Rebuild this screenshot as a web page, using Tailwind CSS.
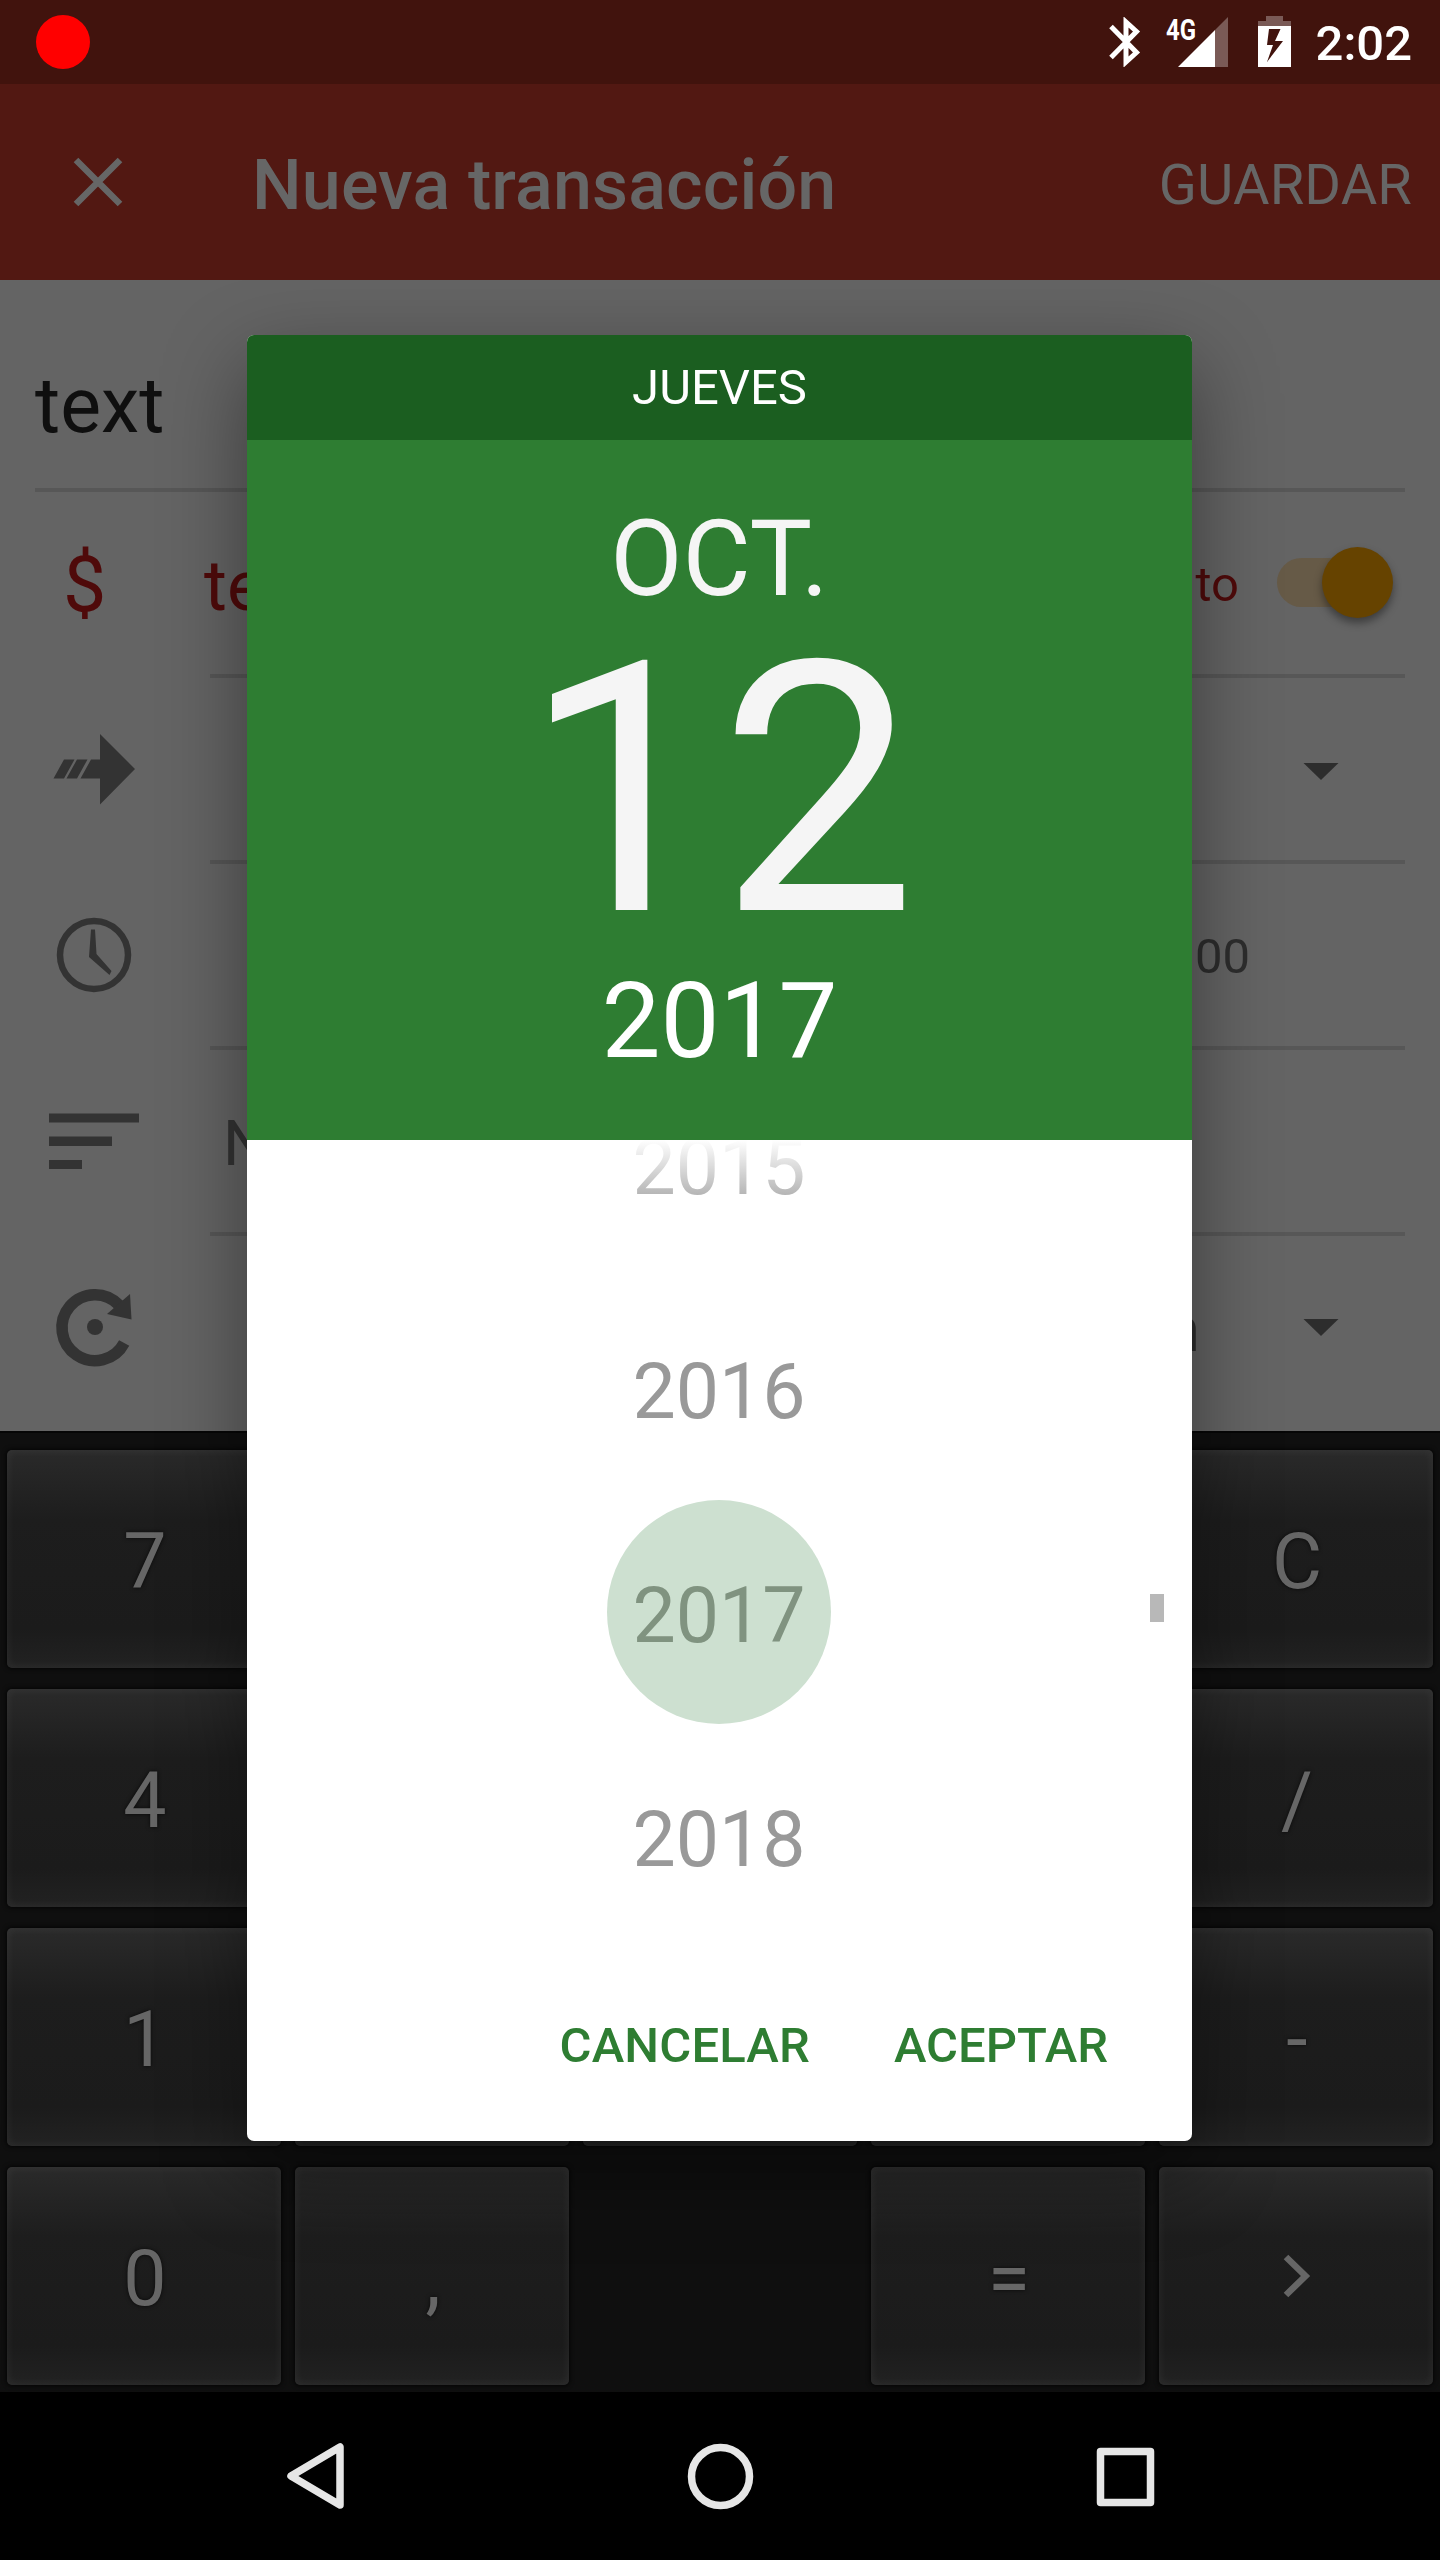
<!DOCTYPE html>
<html lang="es">
<head>
<meta charset="utf-8">
<title>Nueva transacción</title>
<script src="https://cdn.jsdelivr.net/npm/@tailwindcss/browser@4"></script>
</head>
<body class="bg-black">
<div class="relative w-[1440px] h-[2560px] overflow-hidden flex flex-col font-[Roboto,sans-serif] bg-black">

  <!-- Form -->
  <main class="order-3 h-[1151px] shrink-0 bg-[#646464] text-[#2d2d2d]">
    <div class="h-[212px] ml-[35px] mr-[35px] border-b-4 border-[#575757] pt-[76px] text-[77px] leading-[100px] text-[#0f0f0f]">text</div>

    <div class="grid grid-cols-[210px_1fr] pr-[35px] h-[186px] text-[#4f0a0a]">
      <div class="h-[182px] pl-[63px] pt-[4px] flex items-center text-[77px] leading-[100px]">$</div>
      <div class="border-b-4 border-[#575757] flex items-center pr-[12px]">
        <div class="flex-1 -ml-[6px] pt-[6px] text-[70px] leading-[90px]">text</div>
        <div class="pt-[3px] text-[49px] leading-[60px]">to</div>
        <div class="ml-[38px] w-[116px] h-[71px] -mt-[2px] flex items-center">
          <div class="w-[105px] h-[49px] rounded-full bg-[#665a47] flex items-center">
            <div class="ml-[45px] size-[71px] shrink-0 rounded-full bg-[#664300] shadow-[0_5px_8px_rgba(0,0,0,0.4)]"></div>
          </div>
        </div>
      </div>
    </div>

    <div class="grid grid-cols-[210px_1fr] pr-[35px] h-[186px]">
      <div class="h-[182px] pl-[49px] flex items-center">
        <svg class="size-[90px]" viewBox="0 0 90 90" fill="#333"><path d="M51 10L86 45 51 80.500V54.500H31.500L42 35.500H51zM15 35.500H25.500L15 54.500H4.500zM28 35.500H38.500L28 54.500H17.500z"/></svg>
      </div>
      <div class="border-b-4 border-[#575757] flex items-center justify-end pr-[66px] pt-[3px]">
        <svg class="w-[36px] h-[18px]" viewBox="0 0 36 18" fill="#2d2d2d"><path d="M.5 1h35L18 18z"/></svg>
      </div>
    </div>

    <div class="grid grid-cols-[210px_1fr] pr-[35px] h-[186px]">
      <div class="h-[182px] pl-[49px] flex items-center">
        <svg class="size-[90px]" viewBox="0 0 90 90"><circle cx="45" cy="45" r="34" fill="none" stroke="#333" stroke-width="6.500"/><path fill="#333" d="M42 19.500h4L47.500 44 62.500 61 60.500 65 40 47z"/></svg>
      </div>
      <div class="border-b-4 border-[#575757] flex items-center justify-end pr-[155px] pt-[4px] text-[49px] leading-[60px]">00</div>
    </div>

    <div class="grid grid-cols-[210px_1fr] pr-[35px] h-[186px]">
      <div class="h-[182px] pl-[49px] flex items-center">
        <svg class="size-[90px]" viewBox="0 0 90 90" fill="#333"><path d="M0 17.500h90v9H0zM0 40.500h63v9.500H0zM0 64h33v9H0z"/></svg>
      </div>
      <div class="border-b-4 border-[#575757] flex items-center pl-[13px] pt-[5px] text-[63px] leading-[80px] text-[#333]">Nota</div>
    </div>

    <div class="grid grid-cols-[210px_1fr] pr-[35px] h-[182px]">
      <div class="pl-[49px] flex items-center">
        <svg class="size-[90px]" viewBox="0 0 90 90"><path d="M75.200 61A33 33 0 1 1 70 23" fill="none" stroke="#333" stroke-width="11.500"/><path fill="#333" d="M81 12L82.500 37.500 58 32z"/><circle cx="46" cy="45" r="8" fill="#333"/></svg>
      </div>
      <div class="flex items-center justify-end pr-[66px]">
        <div class="pt-[5px] mr-[103px] text-[63px] leading-[80px]">Sin repetición</div>
        <svg class="w-[36px] h-[18px]" viewBox="0 0 36 18" fill="#2d2d2d"><path d="M.5 1h35L18 18z"/></svg>
      </div>
    </div>
  </main>

  <!-- Calculator keypad -->
  <section id="keypad" class="order-4 h-[961px] shrink-0 bg-[#0f0f0f] border-t-[2px] border-[#060606] pt-[17px] px-[7px] grid grid-cols-[repeat(5,274px)] auto-rows-[218px] gap-x-[14px] gap-y-[21px] content-start text-[77px] leading-[100px] text-[#666]"></section>

  <!-- Navigation bar -->
  <nav class="order-5 h-[168px] shrink-0 bg-black flex items-center px-[275px] justify-between">
    <svg class="w-[80px] h-[80px]" viewBox="0 0 80 80" fill="none" stroke="#e6e6e6" stroke-width="7.500" stroke-linejoin="round"><path d="M65 11V69L16 40z"/></svg>
    <svg class="w-[80px] h-[80px]" viewBox="0 0 80 80" fill="none" stroke="#e6e6e6" stroke-width="7.500"><circle cx="40.500" cy="40.500" r="29"/></svg>
    <svg class="w-[80px] h-[80px]" viewBox="0 0 80 80" fill="none" stroke="#e6e6e6" stroke-width="7.500" stroke-linejoin="round"><path d="M15.500 15.500h50v51h-50z"/></svg>
  </nav>

  <!-- Date picker dialog -->
  <div class="absolute left-[247px] top-[335px] w-[945px] h-[1806px] rounded-[7px] overflow-visible shadow-[0_30px_84px_rgba(0,0,0,0.42)]">
    <div class="size-full rounded-[7px] overflow-hidden bg-white flex flex-col">
      <div class="h-[105px] shrink-0 bg-[#1b5e20] text-white text-[49px] flex items-center justify-center">JUEVES</div>
      <div class="h-[700px] shrink-0 bg-[#2e7d32] text-[#f5f5f5] text-center flex flex-col pt-[60px]">
        <div class="text-[105px] leading-[120px]">OCT.</div>
        <div class="mt-[20px] text-[350px] leading-[300px]">12</div>
        <div class="mt-[22px] text-[105px] leading-[120px] text-white">2017</div>
      </div>
      <div class="relative h-[808px] shrink-0 overflow-hidden">
        <div class="-mt-[88px] pr-px flex flex-col items-center text-[77px] leading-[100px] text-[#999]">
          <div class="h-[224px] pt-[7px] flex items-center">2015</div>
          <div class="h-[224px] pt-[7px] flex items-center">2016</div>
          <div class="size-[224px] pt-[7px] flex items-center justify-center rounded-full bg-[#cde0d0] text-[#809380]">2017</div>
          <div class="h-[224px] pt-[7px] flex items-center">2018</div>
        </div>
        <div class="absolute inset-x-0 top-0 h-[76px] bg-linear-to-b from-white to-white/0"></div>
        <div class="absolute right-[28px] top-[454px] w-[14px] h-[28px] bg-[#b8b8b8]"></div>
      </div>
      <div class="flex-1 flex items-center justify-end gap-[84px] pr-[84px] pt-[2px] text-[49px] font-medium text-[#2e7d32]">
        <span class="tracking-[0.15px]">CANCELAR</span><span>ACEPTAR</span>
      </div>
    </div>
  </div>

  <!-- Status bar -->
  <header class="relative order-1 h-[84px] shrink-0 bg-[#41130d] flex items-center pl-[36px] pr-[28px] text-white">
    <div class="size-[54px] rounded-full bg-[#f00]"></div>
    <svg class="ml-auto w-[32px] h-[50px]" viewBox="0 0 32 50" fill="none" stroke="#fff" stroke-width="5"><path d="M2 9.500L27.500 35.500 17 45V5L27.500 14.500 2 40.500"/></svg>
    <svg class="ml-[21px] w-[67px] h-[52px]" viewBox="-2 0 67 52"><path fill="#fff" fill-opacity=".3" d="M64 1v50H51V14z"/><path fill="#fff" d="M51 14v37H14z"/><text x="2" y="23.500" font-family="Roboto" font-weight="700" font-size="29" textLength="30" lengthAdjust="spacingAndGlyphs" fill="#fff">4G</text></svg>
    <svg class="ml-[29px] w-[33px] h-[52px]" viewBox="0 0 33 52"><path fill="#fff" fill-opacity=".3" d="M8 0h17v5h8v5H0V5h8z"/><path fill="#fff" fill-rule="evenodd" d="M0 10h33v41H0zM11 13L9 29h6L9 46 25 25h-8L22.500 13z"/></svg>
    <div class="ml-[25px] pt-[4px] text-[49px] leading-[60px] font-medium">2:02</div>
  </header>

  <!-- App bar -->
  <div class="relative order-2 h-[196px] shrink-0 bg-[#521812] text-[#666] flex items-center pl-[73px] pr-[28px]">
    <svg class="w-[50px] h-[50px]" viewBox="0 0 50 50" stroke="#666" stroke-width="6.500"><path d="M3 3l44 44M47 3L3 47"/></svg>
    <h1 class="ml-[129px] pt-[6px] text-[70px] leading-[90px] font-medium tracking-[0.15px]">Nueva transacción</h1>
    <div class="ml-auto pt-[6px] text-[56px] leading-[70px] tracking-[0.15px]">GUARDAR</div>
  </div>
</div>

<script>
  // Keys in reading order; null leaves a gap in the grid.
  const keys = ['7', '', '', '', 'C', '4', '', '', '', '/', '1', '', '', '', '-', '0', ',', null, '=', 'next'];
  const chevron = '<svg class="w-[28px] h-[44px] -mt-[7px]" viewBox="0 0 28 44" fill="none" stroke="#666" stroke-width="6.500"><path d="M3 3l19.500 19L3 41"/></svg>';
  document.getElementById('keypad').innerHTML = keys.map(k => k === null ? '<div></div>' :
    `<div class="rounded-[5px] pt-[6px] pl-[2px] flex items-center justify-center bg-[linear-gradient(#2a2a2a,#1d1d1d_32%,#1b1b1b_82%,#222)] shadow-[0_0_4px_1px_rgba(0,0,0,0.75),inset_0_0_10px_rgba(255,255,255,0.07)] [text-shadow:0_0_4px_rgba(0,0,0,0.7)]">${k === 'next' ? chevron : k}</div>`).join('');
</script>
</body>
</html>
